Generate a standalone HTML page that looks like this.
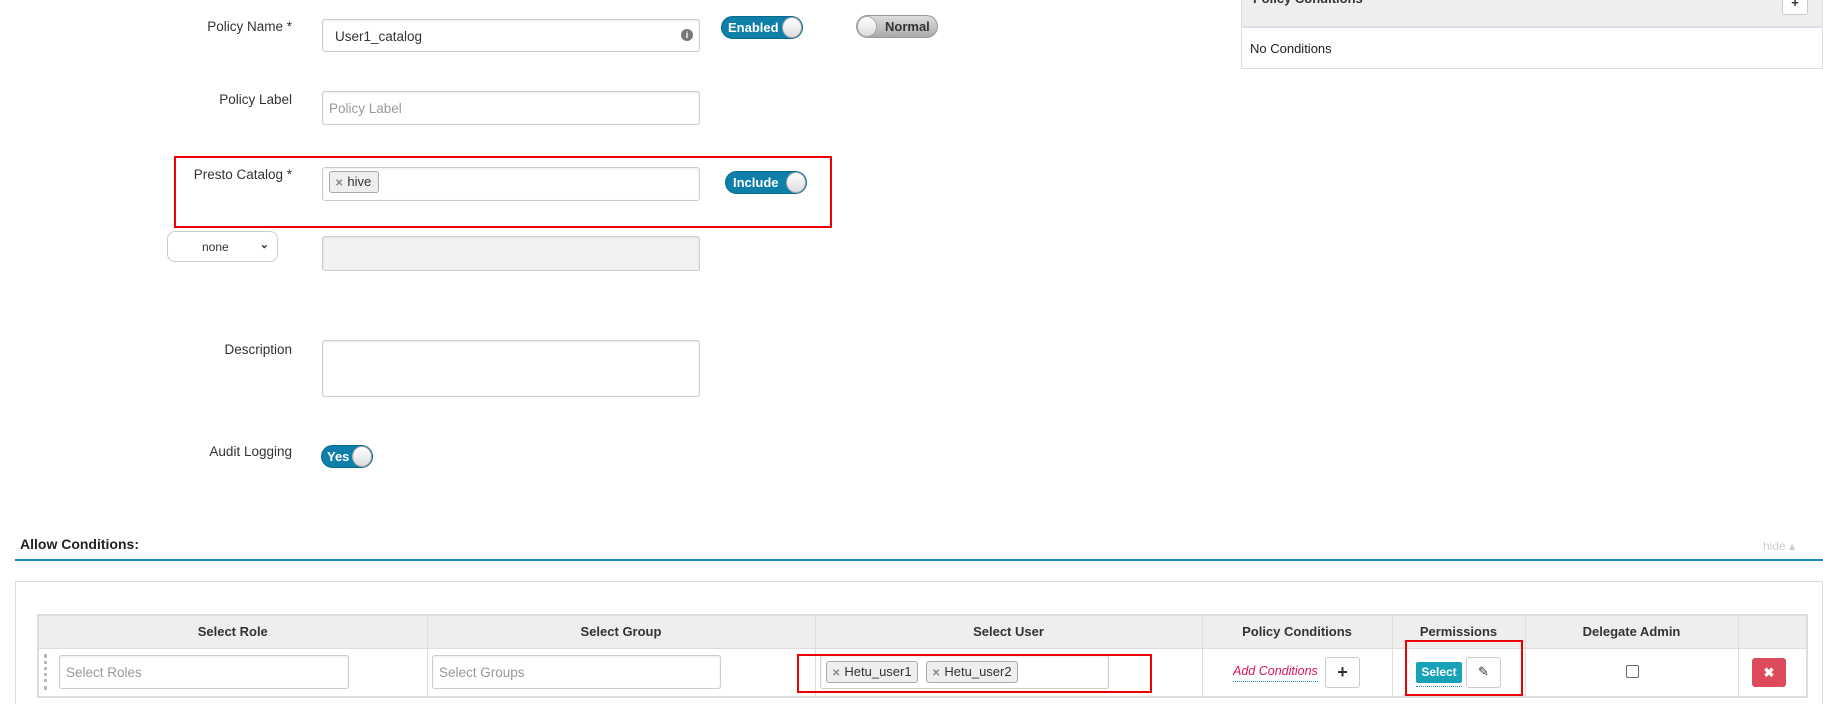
<!DOCTYPE html>
<html style="height:704px;overflow:hidden"><head><meta charset="utf-8"><style>
*{box-sizing:border-box}
body{margin:0;width:1823px;height:704px;position:relative;overflow:hidden;background:#fff;font-family:"Liberation Sans",sans-serif;font-size:13px;color:#333}
.a{position:absolute}
.lbl{position:absolute;text-align:right;width:200px;font-size:13.5px;color:#333}
.inp{position:absolute;border:1px solid #ccc;border-radius:3px;background:#fff;box-shadow:inset 0 1px 2px rgba(0,0,0,.08)}
.ph{color:#999;font-size:13.5px}
.tog{position:absolute;border-radius:12px;background:#0e7fa8;color:#fff;font-weight:bold;font-size:13px;border:1px solid #0a6a8e}
.tog .k{position:absolute;top:0;bottom:0;width:20px;border-radius:50%;background:linear-gradient(#fff,#ddd);border:1px solid #aaa}
.tag{position:absolute;background:#eee;border:1px solid #aaa;border-radius:3px;font-size:13px;padding-left:5px;line-height:20px}
.tag b{color:#888;font-size:10px;margin-right:4px}
.red{position:absolute;border:2px solid #e00}
th,td{border:1px solid #ddd}
</style></head><body>

<div class="lbl" style="left:92px;top:19px">Policy Name *</div>
<div class="inp" style="left:322px;top:19px;width:378px;height:33px;padding:9px 12px;font-size:13.5px">User1_catalog<span class="a" style="right:6px;top:9px;width:12px;height:12px;border-radius:50%;background:#777;color:#fff;font-size:9px;text-align:center;line-height:12px;font-weight:bold">i</span></div>
<div class="tog" style="left:721px;top:16px;width:82px;height:23px"><span class="a" style="left:6px;top:3px">Enabled</span><span class="k" style="right:0"></span></div>
<div class="tog" style="left:856px;top:15px;width:82px;height:23px;background:linear-gradient(#ddd,#aaa);color:#333;border-color:#999"><span class="k" style="left:0"></span><span class="a" style="left:28px;top:3px">Normal</span></div>

<div class="lbl" style="left:92px;top:92px">Policy Label</div>
<div class="inp" style="left:322px;top:91px;width:378px;height:34px;padding:9px 6px"><span class="ph">Policy Label</span></div>

<div class="red" style="left:174px;top:156px;width:658px;height:72px"></div>
<div class="lbl" style="left:92px;top:167px">Presto Catalog *</div>
<div class="inp" style="left:322px;top:167px;width:378px;height:34px"></div>
<div class="tag" style="left:329px;top:171px;width:50px;height:22px"><b>✕</b>hive</div>
<div class="tog" style="left:725px;top:171px;width:82px;height:23px"><span class="a" style="left:7px;top:3px">Include</span><span class="k" style="right:0"></span></div>

<div class="inp" style="left:167px;top:231px;width:111px;height:31px;border-radius:8px;font-size:12px;padding:8px 0 0 34px;box-shadow:none">none <span style="position:absolute;right:8px;top:6px;font-size:11px;font-weight:bold">⌄</span></div>
<div class="inp" style="left:322px;top:236px;width:378px;height:35px;background:#f2f2f2"></div>

<div class="lbl" style="left:92px;top:342px">Description</div>
<div class="inp" style="left:322px;top:340px;width:378px;height:57px"></div>

<div class="lbl" style="left:92px;top:444px">Audit Logging</div>
<div class="tog" style="left:321px;top:445px;width:52px;height:23px"><span class="a" style="left:5px;top:3px">Yes</span><span class="k" style="right:0"></span></div>

<div class="a" style="left:20px;top:536px;font-weight:bold;font-size:14px;color:#222">Allow Conditions:</div>
<div class="a" style="left:1763px;top:539px;font-size:12px;color:#ccc">hide ▴</div>
<div class="a" style="left:15px;top:559px;width:1808px;height:2px;background:#1b8ac2"></div>

<div class="a" style="left:15px;top:581px;width:1808px;height:123px;border:1px solid #ddd;border-bottom:none"></div>
<table class="a" style="left:37px;top:614px;width:1771px;border-collapse:collapse;border:2px solid #ddd;font-size:13px">
<tr style="background:#eee;height:33px;font-weight:bold;color:#333;text-align:center">
<th style="width:389px">Select Role</th><th style="width:388px">Select Group</th><th style="width:387px">Select User</th><th style="width:190px">Policy Conditions</th><th style="width:133px">Permissions</th><th style="width:213px">Delegate Admin</th><th></th></tr>
<tr style="height:49px"><td></td><td></td><td></td><td></td><td></td><td></td><td></td></tr>
</table>
<div class="a" style="left:44px;top:654px;width:3px;height:36px;border-left:3px dotted #bbb"></div>
<div class="inp" style="left:59px;top:655px;width:290px;height:34px;padding:9px 6px"><span class="ph">Select Roles</span></div>
<div class="inp" style="left:432px;top:655px;width:289px;height:34px;padding:9px 6px"><span class="ph">Select Groups</span></div>
<div class="inp" style="left:820px;top:655px;width:289px;height:34px"></div>
<div class="tag" style="left:826px;top:661px;width:92px;height:22px"><b>✕</b>Hetu_user1</div>
<div class="tag" style="left:926px;top:661px;width:92px;height:22px"><b>✕</b>Hetu_user2</div>
<div class="red" style="left:797px;top:654px;width:355px;height:39px"></div>

<div class="a" style="left:1233px;top:664px;font-size:12.5px;font-style:italic;color:#e0115f;border-bottom:1px dotted #1b8ac2;padding-bottom:3px">Add Conditions</div>
<div class="inp" style="left:1325px;top:657px;width:35px;height:31px;text-align:center;font-weight:bold;font-size:18px;line-height:28px;box-shadow:none">+</div>
<div class="red" style="left:1405px;top:640px;width:118px;height:56px"></div>
<div class="a" style="left:1416px;top:662px;width:46px;height:21px;background:#17a2b8;color:#fff;font-weight:bold;font-size:12px;text-align:center;line-height:21px;border-radius:2px">Select</div>
<div class="a" style="left:1416px;top:686px;width:46px;border-bottom:1px dotted #1b8ac2"></div>
<div class="inp" style="left:1466px;top:657px;width:35px;height:31px;text-align:center;font-size:13px;line-height:28px;box-shadow:none">✎</div>
<div class="a" style="left:1626px;top:665px;width:13px;height:13px;border:1px solid #666;border-radius:2px"></div>
<div class="a" style="left:1752px;top:658px;width:34px;height:29px;background:#dc4a5c;border-radius:3px;color:#fff;text-align:center;line-height:29px;font-size:13px;font-weight:bold">✖</div>

<div class="a" style="left:1241px;top:0;width:582px;height:69px;border:1px solid #ddd;border-top:none"></div>
<div class="a" style="left:1242px;top:0;width:580px;height:28px;background:#eee;border-bottom:2px solid #dde"></div>
<div class="a" style="left:1253px;top:-9px;font-weight:bold;font-size:13px">Policy Conditions</div>
<div class="a" style="left:1782px;top:-4px;width:26px;height:19px;background:#fff;border:1px solid #ccc;border-radius:3px;text-align:center;font-weight:bold;line-height:12px">+</div>
<div class="a" style="left:1250px;top:41px;font-size:13px;color:#222">No Conditions</div>
</body></html>
